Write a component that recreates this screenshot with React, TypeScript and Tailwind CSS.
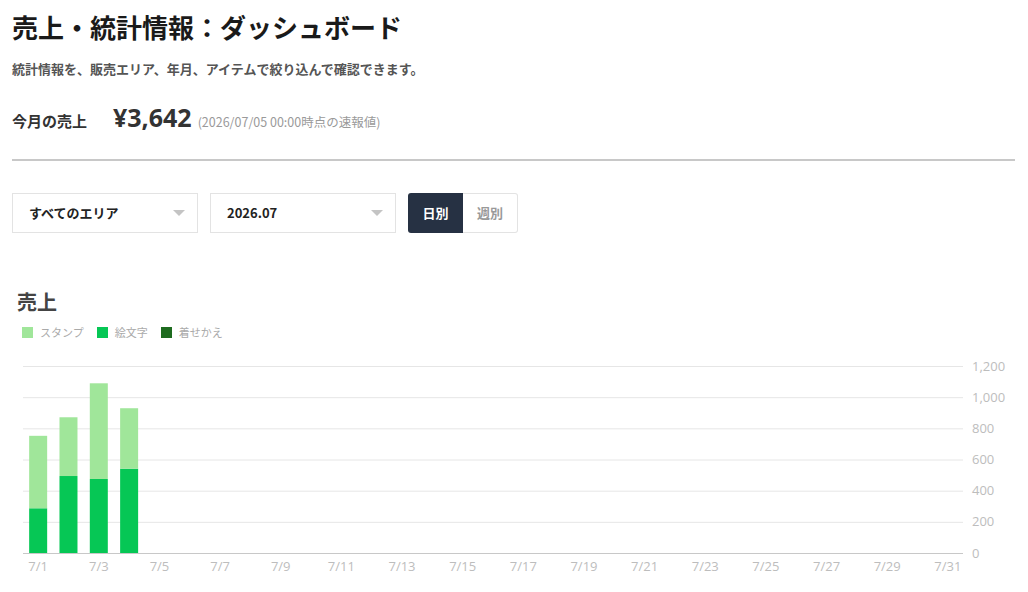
const days = [
  { stamp: 465, emoji: 287 },
  { stamp: 377, emoji: 494 },
  { stamp: 614, emoji: 475 },
  { stamp: 388, emoji: 541 },
];

const legend = [
  { label: 'スタンプ', color: 'bg-[#a0e69a]' },
  { label: '絵文字', color: 'bg-[#06c755]' },
  { label: '着せかえ', color: 'bg-[#1e6b1f]' },
];

// chart geometry (svg coords)
const left = 23;
const right = 963;
const top = 11;
const base = 198;
const dayW = (right - left) / 31;
const scale = (base - top) / 1200;

function SalesChart() {
  const ticks = [0, 200, 400, 600, 800, 1000, 1200];
  return (
    <svg width={1028} height={237} className="block">
      {ticks.map((t) => {
        const y = base - t * scale;
        return (
          <g key={t}>
            {t > 0 && <line x1={left} x2={right} y1={y + 0.5} y2={y + 0.5} stroke="#e6e6e6" />}
            <text x={972} y={y + 4.5} fontSize={13} fill="#bdbdbd" fontFamily="'Open Sans', 'Noto Sans', sans-serif">
              {t.toLocaleString('en-US')}
            </text>
          </g>
        );
      })}
      {days.map((d, i) => {
        const cx = left + dayW * (i + 0.5);
        const x = cx - 9;
        const eH = d.emoji * scale;
        const sH = d.stamp * scale;
        return (
          <g key={i}>
            <rect x={x} y={base - eH} width={18} height={eH} fill="#06c755" />
            <rect x={x} y={base - eH - sH} width={18} height={sH} fill="#a0e69a" />
          </g>
        );
      })}
      <line x1={left} x2={right} y1={base + 0.5} y2={base + 0.5} stroke="#c8c8c8" />
      {Array.from({ length: 16 }, (_, k) => 2 * k + 1).map((day) => (
        <text
          key={day}
          x={left + dayW * (day - 0.5)}
          y={base + 18}
          fontSize={13}
          fill="#bdbdbd"
          textAnchor="middle"
          fontFamily="'Open Sans', 'Noto Sans', sans-serif"
        >
          7/{day}
        </text>
      ))}
    </svg>
  );
}

export default function App() {
  return (
    <div className="w-[1028px] h-[592px] overflow-hidden bg-white text-[#222] font-['Noto_Sans_CJK_JP','Noto_Sans',sans-serif]">
      <div className="px-3">
        {/* Header */}
        <h1 className="pt-[8px] text-[26px] font-bold leading-[38px] text-[#1a1a1a]">売上・統計情報：ダッシュボード</h1>
        <p className="mt-[14px] text-[13px] font-semibold leading-[18px] text-[#555]">
          統計情報を、販売エリア、年月、アイテムで絞り込んで確認できます。
        </p>
        <div className="mt-[23px] flex h-[32px] items-baseline">
          <span className="text-[15px] font-bold leading-[32px] text-[#333]">今月の売上</span>
          <span className="ml-[26px] text-[25px] font-bold leading-[32px] text-[#333] font-['Open_Sans','Noto_Sans',sans-serif]">¥3,642</span>
          <span className="ml-[6px] text-[12.5px] leading-[32px] text-[#9a9a9a]">(2026/07/05 00:00時点の速報値)</span>
        </div>
        <div className="mt-[26px] h-[2px] bg-[#c8c8c8] mr-[1px]" />

        {/* Filters */}
        <div className="mt-[32px] flex items-center gap-3">
          <div className="flex h-[40px] w-[186px] items-center justify-between border border-[#e3e3e3] pl-[16px] pr-[12px]">
            <span className="text-[13px] font-bold text-[#222]">すべてのエリア</span>
            <span className="h-0 w-0 border-x-[6px] border-t-[6px] border-x-transparent border-t-[#c4c4c4]" />
          </div>
          <div className="flex h-[40px] w-[186px] items-center justify-between border border-[#e3e3e3] pl-[16px] pr-[12px]">
            <span className="text-[13px] font-bold text-[#222]">2026.07</span>
            <span className="h-0 w-0 border-x-[6px] border-t-[6px] border-x-transparent border-t-[#c4c4c4]" />
          </div>
          <div className="flex h-[40px]">
            <button className="w-[55px] rounded-l-[3px] bg-[#263143] text-[13px] font-bold text-white">日別</button>
            <button className="w-[55px] rounded-r-[3px] border border-l-0 border-[#e3e3e3] text-[13px] font-bold text-[#999]">週別</button>
          </div>
        </div>

        {/* Chart */}
        <h2 className="mt-[55px] pl-[5px] text-[20px] font-bold leading-[28px] text-[#444]">売上</h2>
        <div className="mt-[8px] flex items-center gap-[13px] pl-[10px]">
          {legend.map((l) => (
            <div key={l.label} className="flex items-center gap-[7px]">
              <span className={`h-[11px] w-[11px] ${l.color}`} />
              <span className="text-[11px] text-[#aaa]">{l.label}</span>
            </div>
          ))}
        </div>
      </div>
      <div className="mt-[14px]">
        <SalesChart />
      </div>
    </div>
  );
}
